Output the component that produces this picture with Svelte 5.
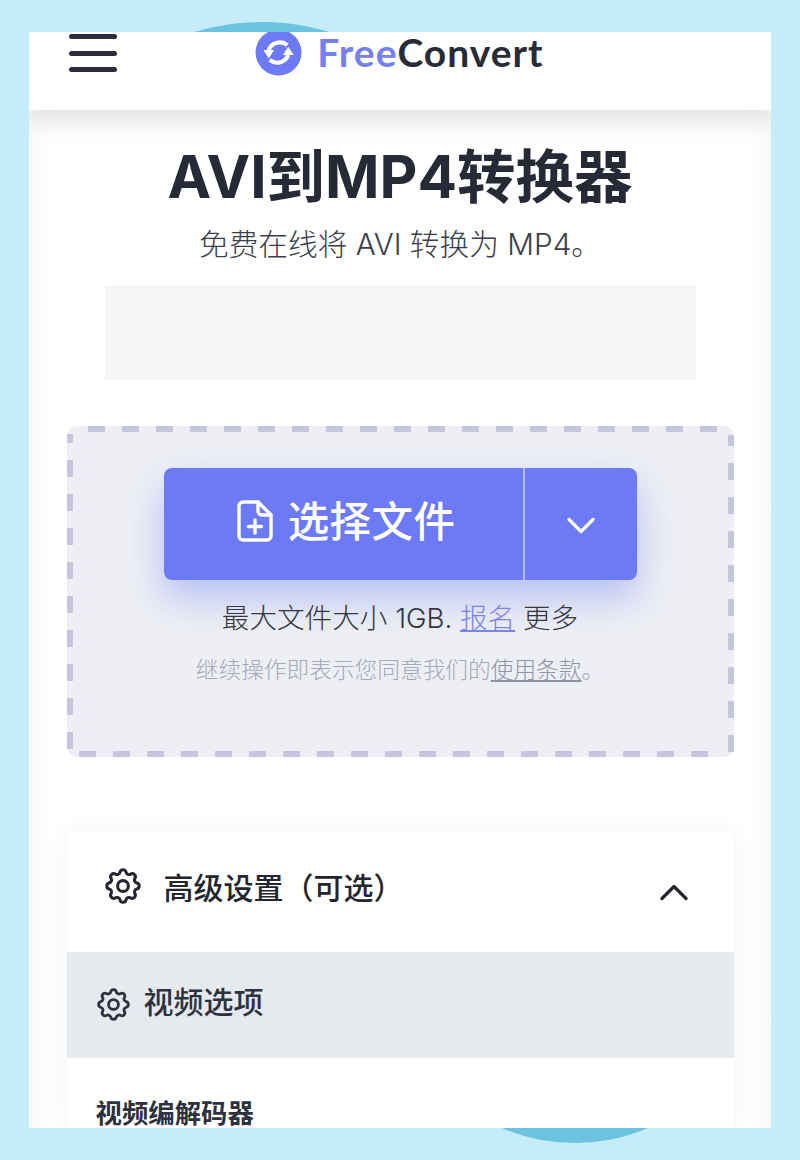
<script>
	const gear = 'M10.325 4.317c.426-1.756 2.924-1.756 3.35 0a1.724 1.724 0 002.573 1.066c1.543-.94 3.31.826 2.37 2.37a1.724 1.724 0 001.065 2.572c1.756.426 1.756 2.924 0 3.35a1.724 1.724 0 00-1.066 2.573c.94 1.543-.826 3.31-2.37 2.37a1.724 1.724 0 00-2.572 1.065c-.426 1.756-2.924 1.756-3.35 0a1.724 1.724 0 00-2.573-1.066c-1.543.94-3.31-.826-2.37-2.37a1.724 1.724 0 00-1.065-2.572c-1.756-.426-1.756-2.924 0-3.35a1.724 1.724 0 001.066-2.573c-.94-1.543.826-3.31 2.37-2.37.996.608 2.296.07 2.572-1.065z'
	const hub = 'M15 12a3 3 0 11-6 0 3 3 0 016 0z'
</script>

<div class="page">
	<div class="blob top"></div>
	<div class="blob bottom"></div>
	<div class="frame">
		<header>
			<div class="burger"><span></span><span></span><span></span></div>
			<div class="logo">
				<svg class="mark" viewBox="0 3 48 45">
					<circle cx="24" cy="24" r="23.5" fill="#6d7af5" />
					<path d="M33 16.500a12 12 0 0 0-19 5" fill="none" stroke="#fff" stroke-width="4.200" />
					<path d="M15 31.500a12 12 0 0 0 19-5" fill="none" stroke="#fff" stroke-width="4.200" />
					<path d="M8.500 21.500h11l-5.500 8.500z" fill="#fff" />
					<path d="M28.500 26.500h11l-5.500-8.500z" fill="#fff" />
				</svg>
				<span class="brand"><span class="free">Free</span>Convert</span>
			</div>
		</header>

		<main>
			<h1>AVI到MP4转换器</h1>
			<p class="sub">免费在线将 AVI 转换为 MP4。</p>
			<div class="ad"></div>

			<section class="drop">
				<svg class="dashes" viewBox="0 0 667 331">
					<path d="M21 3H650" />
					<path d="M12 328H655" />
					<path class="left" d="M3 8V324" />
					<path class="right" d="M664 9V326" />
				</svg>
				<div class="split">
					<button class="pick">
						<svg class="file" viewBox="0 0 36 42" fill="none" stroke="#fff" stroke-width="3.400" stroke-linejoin="round" stroke-linecap="round">
							<path d="M6 2h15l13 13v21a4 4 0 0 1-4 4H6a4 4 0 0 1-4-4V6a4 4 0 0 1 4-4z" />
							<path d="M21 2v9a4 4 0 0 0 4 4h9" />
							<path d="M18 20v13M11.500 26.500h13" />
						</svg>
						<span>选择文件</span>
					</button>
					<button class="more" aria-label="更多">
						<svg viewBox="0 0 28 17" fill="none" stroke="#fff" stroke-width="3.200" stroke-linecap="round" stroke-linejoin="round">
							<path d="M2 2.500l12 12 12-12" />
						</svg>
					</button>
				</div>
				<p class="limit">最大文件大小 1GB. <a href="#signup">报名</a> 更多</p>
				<p class="terms">继续操作即表示您同意我们的<a href="#terms">使用条款</a>。</p>
			</section>

			<section class="card">
				<div class="adv">
					<svg class="gear big" viewBox="0 0 24 24"><path d={gear} /><path d={hub} /></svg>
					<span class="adv-label">高级设置（可选）</span>
					<svg class="up" viewBox="0 0 28 17" fill="none" stroke="#23262f" stroke-width="3.200" stroke-linecap="round" stroke-linejoin="round">
						<path d="M2 14.500l12-12 12 12" />
					</svg>
				</div>
				<div class="video">
					<svg class="gear small" viewBox="0 0 24 24"><path d={gear} /><path d={hub} /></svg>
					<span>视频选项</span>
				</div>
				<div class="codec">视频编解码器</div>
			</section>
		</main>
	</div>
</div>

<style>
:global(body) {
	margin: 0;
	background: #c6ecf7;
}
* {
	box-sizing: border-box;
}
p, h1 {
	margin: 0;
}
.page {
	position: relative;
	height: 1160px;
	padding: 32px 29px;
	overflow: hidden;
	font-family: Inter, "Noto Sans CJK SC", sans-serif;
	color: #282c38;
}
.blob {
	position: absolute;
	border-radius: 50%;
	background: #6cc3e0;
}
.blob.top {
	left: 29px;
	top: 22px;
	width: 466px;
	height: 466px;
}
.blob.bottom {
	left: 390px;
	top: 773px;
	width: 370px;
	height: 370px;
}
.frame {
	position: relative;
	height: 1096px;
	background: linear-gradient(90deg, #f8f8f9, #fff 22px, #fff 720px, #f8f8f9);
}
header {
	position: relative;
	z-index: 1;
	display: flex;
	justify-content: center;
	height: 78px;
	background: #fff;
	box-shadow: 0 8px 24px rgba(40, 44, 56, 0.16);
	clip-path: inset(0 0 -40px 0);
}
.burger {
	position: absolute;
	left: 40px;
	top: 2px;
	display: flex;
	flex-direction: column;
	gap: 11.500px;
	width: 48px;
}
.burger span {
	height: 5px;
	border-radius: 3px;
	background: #2b2e3a;
}
.logo {
	display: flex;
	align-items: flex-start;
	gap: 15px;
	height: 44px;
	margin-left: -1px;
}
.mark {
	width: 47px;
	height: 44px;
}
.brand {
	font-family: Lato, sans-serif;
	font-size: 39px;
	font-weight: 700;
	line-height: 40px;
	letter-spacing: 1px;
	color: #282c38;
}
.free {
	color: #7680ee;
}
main {
	display: flex;
	flex-direction: column;
	align-items: center;
	height: 1018px;
	padding: 0 38px;
	overflow: hidden;
}
h1 {
	margin-top: 27px;
	font-size: 58.500px;
	line-height: 80px;
	font-weight: 700;
	color: #262a36;
}
.sub {
	margin-top: 6px;
	font-size: 29.700px;
	line-height: 42px;
	font-weight: 300;
	color: #3a3e4a;
}
.ad {
	width: 591px;
	height: 95px;
	margin-top: 20px;
	margin-left: 1px;
	background: #f6f6f8;
}
.drop {
	position: relative;
	display: flex;
	flex-direction: column;
	align-items: center;
	width: 667px;
	height: 331px;
	margin-top: 46px;
	padding-top: 42px;
	background: #eeeff5;
	border-radius: 10px;
}
.dashes {
	position: absolute;
	inset: 0;
	width: 100%;
	height: 100%;
	fill: none;
	stroke: #c5c6de;
	stroke-width: 6;
	stroke-dasharray: 17 17;
}
.dashes .left {
	stroke-dashoffset: 8;
}
.dashes .right {
	stroke-dashoffset: 6;
}
.split {
	display: flex;
	width: 473px;
	height: 112px;
	border-radius: 8px;
	background: #6d7af5;
	box-shadow: 0 18px 38px rgba(100, 125, 240, 0.42);
}
button {
	display: flex;
	align-items: center;
	justify-content: center;
	padding: 0;
	border: 0;
	background: none;
	color: #fff;
	font: inherit;
}
.pick {
	gap: 15px;
	width: 361px;
	padding-left: 6px;
	border-right: 2px solid #b4bcf8;
	font-size: 41.500px;
	font-weight: 500;
	letter-spacing: 0.400px;
}
.pick span {
	margin-top: -10px;
}
.file {
	width: 36px;
	height: 42px;
	margin-top: -6px;
}
.more {
	flex: 1;
	padding-top: 2px;
}
.more svg {
	width: 28px;
	height: 17px;
}
.limit {
	margin-top: 18px;
	font-size: 27.600px;
	line-height: 40px;
	font-weight: 300;
	color: #33363f;
}
.limit a {
	color: #7b85e6;
}
.terms {
	margin-top: 15px;
	font-size: 22.700px;
	line-height: 34px;
	font-weight: 300;
	color: #a3a8ba;
}
.terms a {
	color: #8e93a8;
}
.card {
	width: 667px;
	margin-top: 75px;
	background: #fff;
	box-shadow: 0 0 24px rgba(40, 44, 56, 0.06);
	border-radius: 8px 8px 0 0;
}
.adv {
	display: flex;
	align-items: center;
	height: 120px;
	padding: 0 46px 0 38px;
}
.gear {
	fill: none;
	stroke: #23262f;
	stroke-width: 1.700;
	stroke-linecap: round;
	stroke-linejoin: round;
}
.gear.big {
	width: 36px;
	height: 36px;
	margin-top: -12px;
	transform: scale(1.2);
}
.adv-label {
	flex: 1;
	margin-left: 23px;
	margin-top: -12px;
	font-family: "Noto Sans CJK SC", sans-serif;
	font-size: 30px;
	font-weight: 500;
	text-spacing-trim: space-all;
	color: #23262f;
}
.up {
	width: 28px;
	height: 17px;
}
.video {
	display: flex;
	align-items: center;
	gap: 14px;
	height: 106px;
	padding-left: 30px;
	background: #e6e9ee;
	font-size: 30px;
	font-weight: 500;
	color: #2e323e;
}
.gear.small {
	width: 33px;
	height: 33px;
	margin-top: -2px;
	transform: scale(1.2);
	stroke: #2e323e;
}
.video span {
	margin-top: -10px;
}
.codec {
	margin-top: 40px;
	padding-left: 29px;
	font-size: 26.400px;
	line-height: 30px;
	font-weight: 700;
	color: #2e323e;
}
</style>
